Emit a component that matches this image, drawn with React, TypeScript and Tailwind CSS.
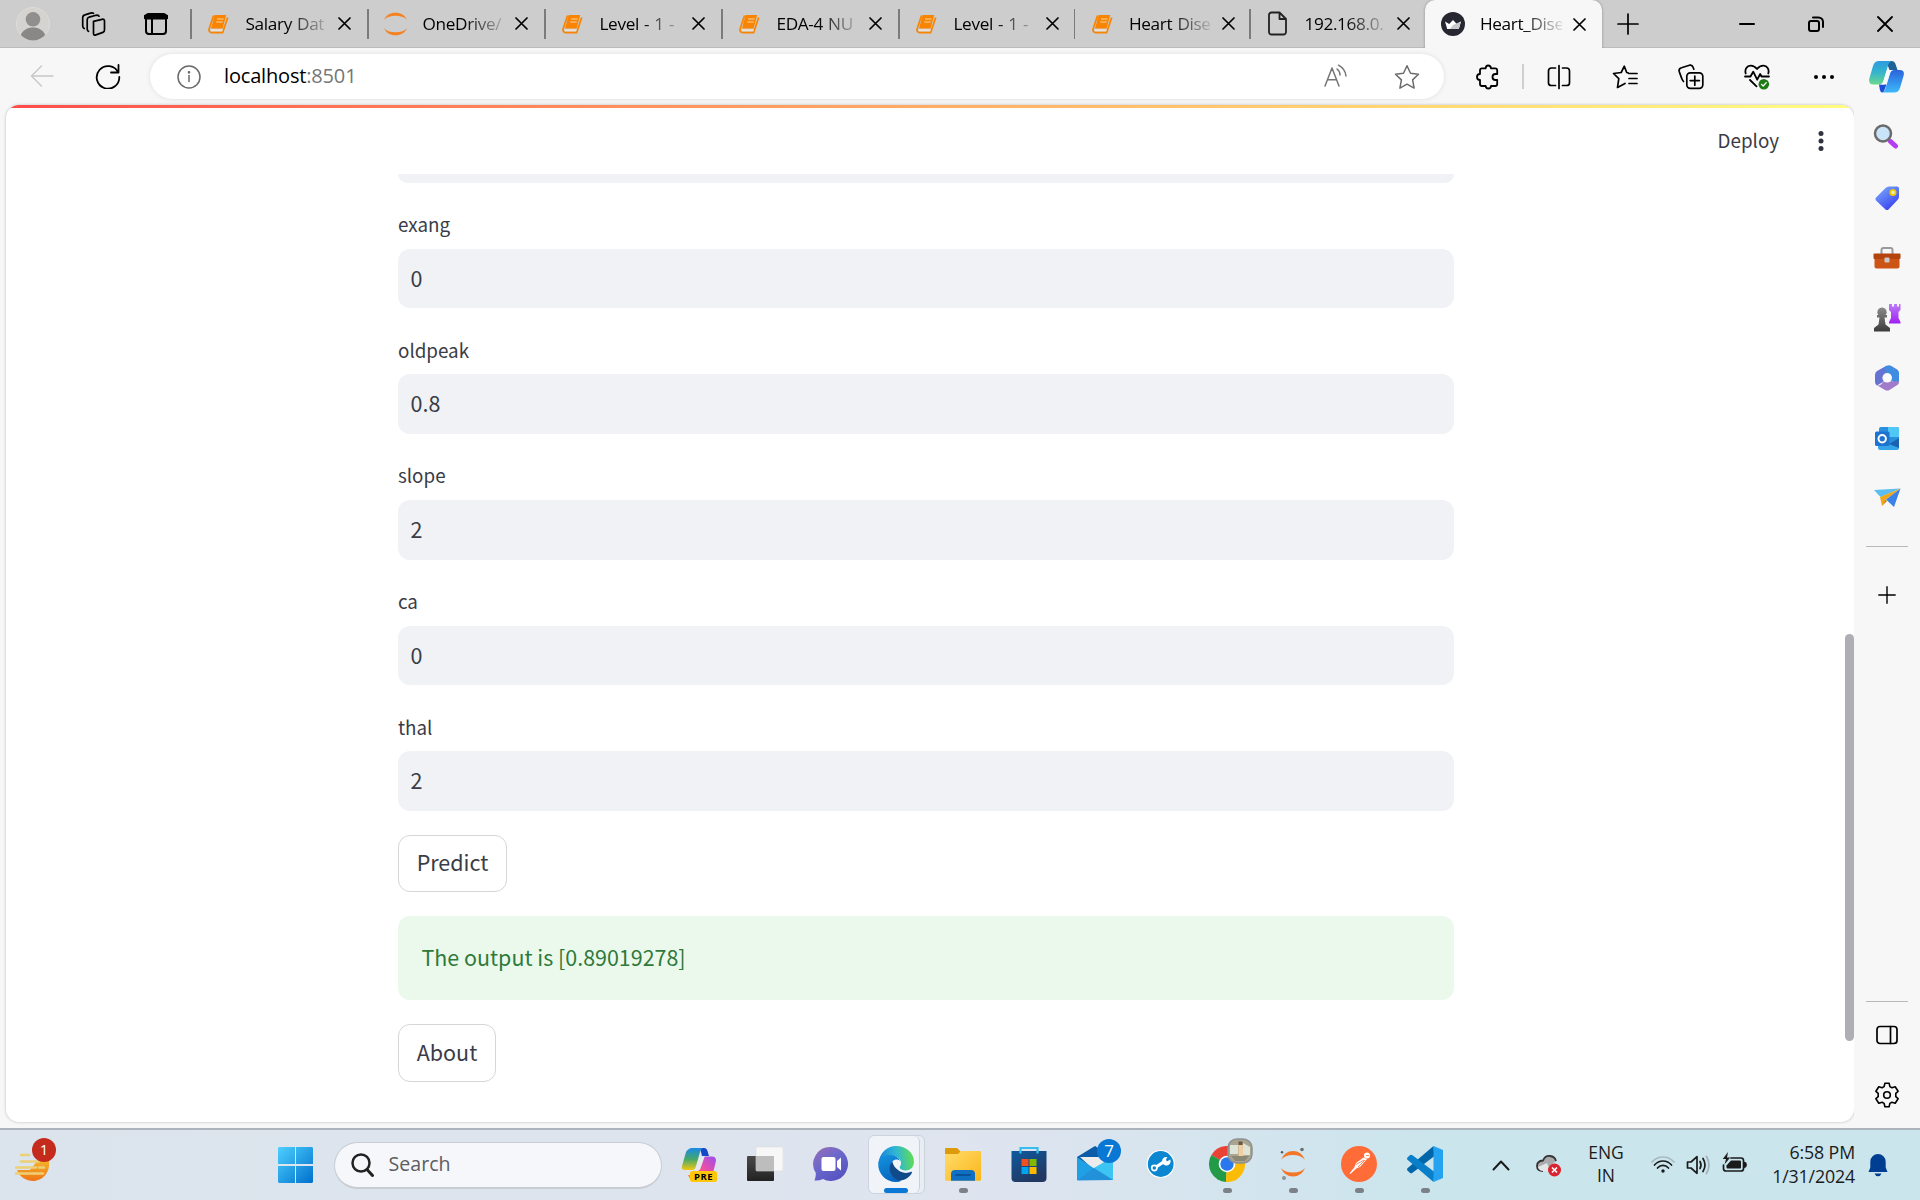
import React from "react";

type IconProps = { w?: number; h?: number; vb?: string; sw?: number; className?: string; children: React.ReactNode };

function Line({ w = 24, h = 24, vb = "0 0 24 24", sw = 1.6, className = "text-black", children }: IconProps) {
  return (
    <svg width={w} height={h} viewBox={vb} fill="none" stroke="currentColor" strokeWidth={sw} strokeLinecap="round" strokeLinejoin="round" className={"shrink-0 " + className}>
      {children}
    </svg>
  );
}

function Art({ w = 36, h = 36, vb = "0 0 36 36", className = "", children }: IconProps) {
  return (
    <svg width={w} height={h} viewBox={vb} className={"shrink-0 " + className}>
      {children}
    </svg>
  );
}

/* ---------- tab strip ---------- */

const BookIcon = () => (
  <Art w={21} h={20} vb="0 0 21 20">
    <path d="M6.6 1h11.600L14.600 14.500H3z" fill="#f98402" />
    <path d="M5.600 1.600 1.400 14c-1 2.800.2 4.700 2.400 4.700h10.800L19.700 3.400" fill="none" stroke="#f98402" strokeWidth="1.700" strokeLinejoin="round" />
    <path d="M3 16.200h11.500" stroke="#fde6cc" strokeWidth="1.300" />
    <path d="M9 5h6.600M8.200 8h6.600" stroke="#fbd3a0" strokeWidth="1.200" />
  </Art>
);

const JupyterArcs = () => (
  <Art w={23} h={24} vb="0 0 23 24">
    <path d="M0 7.800C2 3.200 6.300.8 11.500.8S21 3.200 23 7.800C20 4.800 16 3.800 11.500 3.800S3 4.800 0 7.800zM0 16.200c2 4.600 6.300 7 11.500 7s9.500-2.400 11.500-7c-3 3-7 4-11.500 4s-8.500-1-11.500-4z" fill="#f58220" />
  </Art>
);

const FileIcon = () => (
  <Line w={22} h={25} vb="0 0 22 25" sw={1.800} className="text-[#222]">
    <path d="M4.500 1.500h8L19 8v13a2.500 2.500 0 0 1-2.500 2.500h-12A2.500 2.500 0 0 1 2 21V4a2.500 2.500 0 0 1 2.500-2.500zM12.500 1.500V8H19" />
  </Line>
);

const CrownIcon = () => (
  <Art w={24} h={24} vb="0 0 24 24">
    <circle cx="12" cy="12" r="12" fill="#262730" />
    <path d="M4 9.500 8.200 12 12 8l3.800 4L20 9.500 17.800 17H6.200z" fill="#fff" />
    <path d="m12 13 8-3.500L17.800 17H9z" fill="#c9c9cc" />
  </Art>
);

const CloseX = () => (
  <Line w={13} h={13} vb="0 0 13 13" sw={1.700}>
    <path d="m1 1 11 11M12 1 1 12" />
  </Line>
);

const wide = "flex w-[177px] items-center";
const narrow = "flex w-[175.500px] items-center";

const tabs: { title: string; icon: React.ReactNode; cls: string }[] = [
  { title: "Salary Dat", icon: <BookIcon />, cls: wide },
  { title: "OneDrive/", icon: <JupyterArcs />, cls: wide },
  { title: "Level - 1 -", icon: <BookIcon />, cls: wide },
  { title: "EDA-4 NU", icon: <BookIcon />, cls: wide },
  { title: "Level - 1 -", icon: <BookIcon />, cls: narrow },
  { title: "Heart Dise", icon: <BookIcon />, cls: narrow },
  { title: "192.168.0.", icon: <FileIcon />, cls: narrow },
];

function TabBody({ title, icon }: { title: string; icon: React.ReactNode }) {
  return (
    <>
      <div className="ml-[15px] flex w-[24px] shrink-0 justify-center">{icon}</div>
      <div className="ml-[15px] w-[82px] whitespace-nowrap bg-linear-to-r from-black from-50% to-black/10 to-100% bg-clip-text text-[17.200px] leading-[26px] tracking-[-0.350px] text-transparent [word-spacing:1px]">
        {title}
      </div>
      <div className="ml-[10.500px]"><CloseX /></div>
    </>
  );
}

function TabStrip() {
  return (
    <div className="flex h-[48px] items-center border-b border-[#bcbaba] bg-[#cdcdcd]">
      <div className="flex w-[190px] items-center">
        <Art w={34} h={34} vb="0 0 34 34" className="ml-[16px]">
          <circle cx="17" cy="17" r="16.500" fill="#d5d3d0" stroke="#dedcd8" />
          <circle cx="17" cy="12.300" r="7.300" fill="#918f8d" />
          <path d="M4.800 28c2-5 6.600-7.600 12.200-7.600S27.200 23 29.200 28A16.500 16.500 0 0 1 17 33.500 16.500 16.500 0 0 1 4.800 28z" fill="#8a8886" />
        </Art>
        <Line w={26} h={26} vb="0 0 26 26" sw={1.700} className="ml-[30px]">
          <path d="m13.500 10.300 8.500-2q2.500-.5 2.500 1.800v8.900q0 1.800-1.600 2.400l-7 2.500q-2.400.8-2.400-1.400v-10.200q0-1.600 0-2zM8.500 20.300q-1.300-.6-1.300-2.400V8.600q0-2 2-2.500l6.800-1.800q2.500-.6 3 .9M4.200 17.500q-1.500-.8-1.500-2.700V6.800q0-2.300 2.200-2.900l5.600-1.800q2-.6 3 .2" />
        </Line>
        <Line w={24} h={24} vb="0 0 24 24" sw={2} className="ml-[38px]">
          <rect x="2" y="2" width="20" height="20" rx="3" />
          <path d="M2 5h20" strokeWidth="5" />
          <path d="M8 7v15" />
        </Line>
      </div>
      {tabs.map((t, i) => (
        <div key={i} className={t.cls}>
          <div className="h-[30px] w-[1.500px] shrink-0 bg-[#7b7b7b]" />
          <TabBody title={t.title} icon={t.icon} />
        </div>
      ))}
      <div className="mb-[-2px] flex h-[49px] w-[177px] items-center rounded-t-[10px] bg-[#f7f7f7] pb-[1px] pl-[1.500px] shadow-[0_0_3px_rgba(0,0,0,0.3)]">
        <TabBody title="Heart_Dise" icon={<CrownIcon />} />
      </div>
      <Line w={22} h={22} vb="0 0 22 22" sw={1.700} className="ml-[15px] text-black">
        <path d="M11 1v20M1 11h20" />
      </Line>
      <div className="ml-auto flex items-center">
        <Line w={16} h={16} vb="0 0 16 16" sw={2}><path d="M1 8h14" /></Line>
        <Line w={16} h={16} vb="0 0 16 16" sw={2} className="ml-[53px] text-black">
          <rect x="1" y="5" width="10" height="10" rx="2" />
          <path d="M5 1.500h5.500a4.500 4.500 0 0 1 4.500 4.500v5" />
        </Line>
        <Line w={16} h={16} vb="0 0 16 16" sw={1.800} className="ml-[53px] mr-[27px] text-black"><path d="m1 1 14 14M15 1 1 15" /></Line>
      </div>
    </div>
  );
}

/* ---------- address row ---------- */

function Slot({ children }: { children: React.ReactNode }) {
  return <div className="flex w-[66.200px] shrink-0 justify-center">{children}</div>;
}

function Toolbar() {
  return (
    <div className="flex h-[57px] items-center bg-[#f7f7f7]">
      <Line w={24} h={22} vb="0 0 24 22" sw={1.500} className="mb-[2px] ml-[30px] text-[#c8c8c8]">
        <path d="M11.500 1 1.500 11l10 10M2 11h21" />
      </Line>
      <Line w={26} h={26} vb="0 0 26 26" sw={1.800} className="mb-[1px] ml-[41px] text-black">
        <path d="M23.200 9.500A11.300 11.300 0 1 0 24.300 14M23.500 2v7.500H16" />
      </Line>
      <div className="ml-[29px] flex h-[45px] w-[1294px] items-center rounded-full bg-white shadow-[0_0_5px_rgba(0,0,0,0.1)]">
        <Line w={24} h={24} vb="0 0 24 24" sw={1.500} className="ml-[27px] text-[#6a6a6a]">
          <circle cx="12" cy="12" r="11" />
          <path d="M12 10.500v6" /><circle cx="12" cy="7.300" r=".6" fill="currentColor" />
        </Line>
        <div className="ml-[23px] mt-[-1px] text-[20px] leading-[28px] tracking-[-0.170px] text-black">
          localhost<span className="text-[#767676]">:8501</span>
        </div>
        <Line w={24} h={24} vb="0 0 24 24" sw={1.500} className="ml-auto mr-[46px] mt-[-2px] text-[#757575]">
          <path d="M1 22 8 4l7 18M3.500 15.800h9M13 5c2 1.500 3 3.500 3 6M14.500 1.200c4.500 2.500 7 6 7.500 10.800" />
        </Line>
        <Line w={26} h={26} vb="0 0 26 26" sw={1.500} className="mr-[24.500px] text-[#6c6c6c]">
          <path d="m13 1.700 3.500 7.500 8 1-5.900 5.700 1.500 8.200L13 20.200l-7.100 3.900 1.500-8.200-5.900-5.700 8-1z" />
        </Line>
      </div>
      <div className="ml-[11px] flex items-center">
        <Slot>
          <Line w={24} h={26} vb="0 0 24 26" sw={1.800}>
            <path d="M6 4.300h3.700Q9.700 1.500 12.200 1.500T15 4.300h4.200q2 0 2 2V10h-1.700a3 3 0 0 0 0 6h1.700v4q0 2-2 2H15q0 2.500-2.600 2.500T9.700 22H6q-2 0-2-2v-4Q1 16 1 13t3-3V6.300q0-2 2-2z" />
          </Line>
        </Slot>
        <div className="ml-[1px] h-[25px] w-[2px] bg-[#cfcfcf]" />
        <div className="ml-[1.500px] flex items-center">
          <Slot>
            <Line w={24} h={26} vb="0 0 24 26" sw={1.700}>
              <path d="M12 1.500v23M8.500 4H4.500Q1.500 4 1.500 7v12q0 2.500 3 2.500h4M15.500 4h4q3 0 3 3v12q0 2.500-3 2.500h-4" />
            </Line>
          </Slot>
          <Slot>
            <Line w={26} h={26} vb="0 0 26 26" sw={1.700}>
              <path d="m16 8.800-1.300-.3L12.300 2.200 9.200 8.500l-7.700 1 5.300 5.200-1.300 8.800 7.500-4M17 9.500h8M17 14.500h8M17 19.500h8" />
            </Line>
          </Slot>
          <Slot>
            <Line w={26} h={26} vb="0 0 26 26" sw={1.700}>
              <rect x="8.800" y="8.800" width="16" height="15.500" rx="3.500" />
              <path d="M16.800 12v9.200M12.200 16.600h9.200M5.500 17.500c-1-1-1.500-2-1.900-3.400L1.200 7.500C.8 5.500 1.500 4.400 3.500 3.800l8-2.600c1.800-.4 3 .2 3.600 2l.7 2" />
            </Line>
          </Slot>
          <Slot>
            <Line w={26} h={28} vb="0 0 26 28" sw={1.800}>
              <path d="M1.700 10.500C.5 6 3 3 6.500 2.700c2.500-.2 4.500 1 6.500 3.300 2-2.300 4-3.500 6.500-3.300 3.500.3 6 3.300 4.800 7.800M1 13.500h5.500l2.700-4.800 4 8 3-5.700 1.300 2.500H25M6 17l6.500 6.300" />
              <circle cx="19.800" cy="21.200" r="5.300" fill="#1e7a12" stroke="none" />
              <path d="m17.500 21.400 1.700 1.600 3-3.400" stroke="#fff" strokeWidth="1.300" />
            </Line>
          </Slot>
          <Slot>
            <Art w={22} h={6} vb="0 0 22 6"><circle cx="3" cy="3" r="2" /><circle cx="11" cy="3" r="2" /><circle cx="19" cy="3" r="2" /></Art>
          </Slot>
          <Art w={37} h={34} vb="0 0 37 34" className="ml-[11px]">
            <defs>
              <linearGradient id="cpA" x1=".3" y1="0" x2="0.300" y2="1"><stop stopColor="#2d9be0" /><stop offset=".5" stopColor="#36b5cc" /><stop offset="1" stopColor="#6bd88c" /></linearGradient>
              <linearGradient id="cpB" x1=".3" y1="0" x2="0.300" y2="1"><stop stopColor="#2a64dc" /><stop offset="1" stopColor="#3db8fa" /></linearGradient>
            </defs>
            <path d="M18 1h6q2.500 0 3.300 2.500L29.500 10h-8z" fill="#1d6398" />
            <path d="M11 1h13q-2.800.5-4 4.500L15.500 21q-1.200 3.500-4.500 3.500H5.500Q.3 24.500 1.200 19L5 6q1.500-5 6-5z" fill="url(#cpA)" />
            <path d="M11 24.500h7.500L16.500 30q-.8 2.500-2.500 2.500-1.500 0-2.200-3z" fill="#1d4ed8" />
            <path d="M26 32.500H14q2.500-.5 3.500-4L22 13.500Q23 10 26 10h5.500q5.200 0 4.300 5L32 28q-1.500 4.500-6 4.500z" fill="url(#cpB)" />
            <path d="M20 10h5.500q-2.800 0-3.600 3.500L19 22q-.8 2.500-3.200 2.500H11q3.200 0 4.500-3.500L18 12.500q.6-2.500 2-2.500z" fill="#f8fafa" />
          </Art>
        </div>
      </div>
    </div>
  );
}

/* ---------- edge sidebar ---------- */

function SideItem({ children }: { children: React.ReactNode }) {
  return <div className="flex h-[60.100px] shrink-0 items-center justify-center">{children}</div>;
}

function Sidebar() {
  return (
    <div className="flex w-[66px] flex-col bg-[#f7f7f7]">
      <div className="h-[2.500px]" />
      <SideItem>
        <Art w={26} h={26} vb="0 0 26 26" className="mb-[2px] mr-[2px]">
          <path d="m17.500 17.500 5 4.500" stroke="#b43df0" strokeWidth="5" strokeLinecap="round" />
          <circle cx="10" cy="9.500" r="8" fill="#c9e3f8" stroke="#6b6b6b" strokeWidth="2.500" />
        </Art>
      </SideItem>
      <SideItem>
        <Art w={26} h={26} vb="0 0 26 26">
          <defs><linearGradient id="tag" x1="0" y1="0" x2=".7" y2="1"><stop stopColor="#7db4fb" /><stop offset="1" stopColor="#3a3ff0" /></linearGradient></defs>
          <path d="M15 1.500h8q2 0 2 2v8q0 2-1.500 3.500l-9 9.500q-1.500 1.200-3 0L2 15.500q-1.300-1.500 0-3L11.500 3Q13 1.500 15 1.500z" fill="url(#tag)" />
          <circle cx="19" cy="7.500" r="2.600" fill="#e8f0c0" stroke="#f2c800" strokeWidth="1.800" />
        </Art>
      </SideItem>
      <SideItem>
        <Art w={28} h={22} vb="0 0 28 22">
          <path d="M8.500 7V3q0-2 2-2h7q2 0 2 2v4" fill="none" stroke="#9a9a9a" strokeWidth="2" />
          <rect x="1.500" y="8" width="25" height="13.500" rx="2" fill="#cc5515" />
          <rect x="0.500" y="6.500" width="27" height="5.500" rx="1" fill="#b5430c" />
          <rect x="11.500" y="10.500" width="5" height="5" rx="1" fill="#c9c9c9" />
        </Art>
      </SideItem>
      <SideItem>
        <Art w={28} h={28} vb="0 0 28 28">
          <defs>
            <linearGradient id="rook" x1="0" y1="0" x2="0" y2="1"><stop stopColor="#bb7df8" /><stop offset="1" stopColor="#a020f0" /></linearGradient>
            <linearGradient id="pawn" x1="0" y1="0" x2="0" y2="1"><stop stopColor="#8a8a8a" /><stop offset="1" stopColor="#3c3c3c" /></linearGradient>
          </defs>
          <path d="M16 0h3v2.500h2V0h3v2.500h2V0h1.500v6l-2 2v6l2 4v1.500H16V18l2-4V8l-2-2z" fill="url(#rook)" />
          <path d="M9 3.500a4.500 4.500 0 0 1 3.500 7.500H14v2.500h-2.500l1 7L17 24v3.500H1V24l4.500-3.500 1-7H4V11h1.500A4.500 4.500 0 0 1 9 3.500z" fill="url(#pawn)" />
        </Art>
      </SideItem>
      <SideItem>
        <Art w={26} h={28} vb="0 0 26 28">
          <path d="M13 1.500 3 7Q1 8.500 1 10.500v7.500q0 2.500 2 3.500l6-3.500 4-4V6z" fill="#6673d2" />
          <path d="M10 3.500 13 1.700q2-1 4 0l6.500 4q1.500 1.200 1.500 3.300v8q0 2-1.500 3.500L18 17l-5-3-1-6z" fill="#3f8ce0" />
          <path d="M24 20.500 15.500 26q-2.200 1-4.500 0L2.500 21q2.500 1 4.500-.5l6-6.500 5.500 3.500 6.500-.5q0 2.300-1 3.500z" fill="#a07bc9" />
          <circle cx="13.200" cy="13.800" r="4.800" fill="#fafafa" />
        </Art>
      </SideItem>
      <SideItem>
        <Art w={26} h={25} vb="0 0 26 25">
          <rect x="5" y="1" width="20" height="22" rx="2" fill="#2a8fdd" />
          <path d="M14 1h9q2 0 2 2v8H14z" fill="#50c8f5" />
          <path d="M4 11.500 15 18l10-6v10q0 2-2 2H6q-2 0-2-2z" fill="#35a5ea" />
          <path d="M15 18 25 12v10z" fill="#1b62b0" />
          <rect x="1" y="5.500" width="14.500" height="14.500" rx="1.500" fill="#1f73d0" />
          <circle cx="8.200" cy="12.700" r="3.700" fill="none" stroke="#fff" strokeWidth="2" />
        </Art>
      </SideItem>
      <SideItem>
        <Art w={27} h={20} vb="0 0 27 20">
          <path d="m0 2 26.500-1.500L6.500 9z" fill="#5bbdf2" />
          <path d="M26.500.5 6 9l2 9 4-6.500z" fill="#f0a818" />
          <path d="M26.500.5 20 19l-8-7.500z" fill="#3b82e8" />
          <path d="m8 18 5-5-1.500-1.200z" fill="#c47e08" />
        </Art>
      </SideItem>
      <div className="mx-auto mt-[18px] h-px w-[42px] bg-[#b9b9b9]" />
      <Line w={18} h={18} vb="0 0 18 18" sw={1.400} className="mx-auto mt-[39px] text-black"><path d="M9 .8v16.400M.8 9h16.400" /></Line>
      <div className="mx-auto mt-auto h-px w-[42px] bg-[#b9b9b9]" />
      <Line w={22} h={20} vb="0 0 22 20" sw={1.700} className="mx-auto mt-[23px] text-black">
        <rect x="1" y="1.500" width="20" height="17" rx="3" /><path d="M14.500 1.500v17" />
      </Line>
      <Line w={26} h={26} vb="0 0 26 26" sw={1.600} className="mx-auto mb-[20px] mt-[37px] text-black">
        <circle cx="13" cy="13" r="3.300" />
        <path d="M10.900 1.200h4.200l.8 3.400 2 1.100 3.300-1 2.900 4.600-2.300 2v3.400l2.300 2-2.900 4.600-3.300-1-2 1.100-.8 3.400h-4.200l-.8-3.400-2-1.100-3.300 1-2.900-4.600 2.300-2v-3.400l-2.300-2 2.900-4.600 3.300 1 2-1.100z" />
      </Line>
    </div>
  );
}

/* ---------- page ---------- */

function Field({ label, value }: { label: string; value: string }) {
  return (
    <div className="flex h-[125.600px] flex-col justify-end">
      <div className="mb-[12.500px] text-[18.800px] leading-[24px]">{label}</div>
      <div className="flex h-[59.600px] shrink-0 items-center rounded-[12px] bg-[#f0f2f6] pb-[1.600px] pl-[12.500px] text-[21.500px] leading-[30px]">{value}</div>
    </div>
  );
}

function Page() {
  return (
    <div className="ml-[6px] flex h-[1017px] w-[1848px] flex-col overflow-hidden rounded-[13px] bg-white font-['Noto_Sans_CJK_SC','Noto_Sans',sans-serif] text-[#3a3c47] shadow-[0_0_3px_rgba(0,0,0,0.25)]">
      <div className="h-[3px] shrink-0 bg-linear-to-r from-[#ff4b4b] to-[#fffd80]" />
      <div className="flex h-[66px] shrink-0 items-center justify-end">
        <div className="mt-[-2px] text-[18.800px] leading-[26px]">Deploy</div>
        <Art w={6} h={22} vb="0 0 6 22" className="ml-[39px] mr-[30px]"><circle cx="3" cy="3.500" r="2.500" fill="#31333f" /><circle cx="3" cy="11" r="2.500" fill="#31333f" /><circle cx="3" cy="18.500" r="2.500" fill="#31333f" /></Art>
      </div>
      <div className="flex grow">
        <div className="ml-[392px] w-[1056px]">
          <div className="h-[8.800px] rounded-b-[12px] bg-[#f0f2f6]" />
          <Field label="exang" value="0" />
          <Field label="oldpeak" value="0.8" />
          <Field label="slope" value="2" />
          <Field label="ca" value="0" />
          <Field label="thal" value="2" />
          <button className="mt-[24px] flex h-[57.600px] w-[109px] items-center justify-center rounded-[12px] border border-[#d6d6d9] pb-[3px] text-[21.500px]">Predict</button>
          <div className="mt-[24px] flex h-[83.600px] items-center rounded-[12px] bg-[#ebf9ec] pb-[2px] pl-[23.500px] text-[21.450px] text-[#2f7a3b]">The output is [0.89019278]</div>
          <button className="mt-[24px] flex h-[57.600px] w-[98px] items-center justify-center rounded-[12px] border border-[#d6d6d9] pb-[2px] text-[21.500px]">About</button>
        </div>
        <div className="ml-auto mt-[460px] h-[407px] w-[9px] rounded-full bg-[#aeaeb4]" />
      </div>
    </div>
  );
}

/* ---------- taskbar ---------- */

function TaskItem({ running, children }: { running?: boolean; children: React.ReactNode }) {
  return (
    <div className="flex h-[70px] w-[66px] shrink-0 flex-col items-center">
      <div className="mt-[16px] flex h-[36px] items-center">{children}</div>
      {running && <div className="mt-[6px] h-[5px] w-[9px] rounded-full bg-[#7c8187]" />}
    </div>
  );
}

function Taskbar() {
  return (
    <div className="flex h-[72px] items-center border-t-2 border-[#adb3bb] bg-linear-to-r from-[#dbe4ec] via-[#dfe4ef] to-[#cbe5ed] to-75% text-[#1b1b1b]">
      <div className="relative ml-[15px] h-[70px] w-[42px]">
        <Art w={42} h={46} vb="0 0 42 46" className="mt-[8px]">
          <defs><linearGradient id="sun" x1="0" y1="0" x2="0" y2="1"><stop stopColor="#f3b62a" /><stop offset="1" stopColor="#ef7417" /></linearGradient></defs>
          <path d="M2 33h13l8-10h11v6a16.500 16.500 0 0 1-32 4z" fill="url(#sun)" transform="translate(0 -1)" />
          <path d="M6 17h8M6 23.500h18M1 29.500h20M24 29.500h5M1 35.500h27" stroke="#edcf76" strokeWidth="2.600" strokeLinecap="round" />
        </Art>
        <div className="absolute left-[17px] top-[8px] flex h-[24px] w-[24px] items-center justify-center rounded-full bg-[#c42b1c] pb-[1px] text-[15px] text-white">1</div>
      </div>
      <Art w={35} h={36} vb="0 0 35 36" className="ml-[221px]">
        <defs><linearGradient id="win" x1="0" y1="0" x2="1" y2="1"><stop stopColor="#4dd0ff" /><stop offset="1" stopColor="#0070cc" /></linearGradient></defs>
        <path d="M1 0h16v17H0V1zM18 0h16l1 1v16H18zM0 19h17v17H1l-1-1zM18 19h17v16l-1 1H18z" fill="url(#win)" />
      </Art>
      <div className="ml-[21px] flex h-[47px] w-[328px] items-center rounded-full border border-b-2 border-[#c8ccd3] bg-[#f6f7fa]">
        <Line w={23} h={24} vb="0 0 23 24" sw={2.500} className="ml-[16px] text-[#222]">
          <circle cx="10" cy="10" r="8.500" /><path d="m16 16.500 5.500 6" strokeWidth="3" />
        </Line>
        <div className="ml-[14.500px] mt-[-1px] text-[19.600px] leading-[26px] text-[#5c5e61]">Search</div>
      </div>
      <div className="ml-[4px] flex">
        <TaskItem>
          <Art>
            <defs>
              <linearGradient id="pa" x1="0" y1="0" x2="0" y2="1"><stop stopColor="#1a8ae8" /><stop offset=".5" stopColor="#43a86a" /><stop offset="1" stopColor="#f2c811" /></linearGradient>
              <linearGradient id="pb" x1="1" y1="0" x2="0" y2="1"><stop stopColor="#9a4ff0" /><stop offset=".5" stopColor="#f04fa0" /><stop offset="1" stopColor="#ff8a4a" /></linearGradient>
            </defs>
            <path d="M19 2h4q2.500 0 3.500 3l1.500 5h-7z" fill="#1547c8" />
            <path d="M8 3q1-1 3-1h12q-3 0-4 4l-4 14q-1 4-4 4H4q-4 0-3-4L5 6q1-2 3-3z" fill="url(#pa)" />
            <path d="M9 33h14q3 0 4-3h4q3-10 4-15.500 0-4-4-4h-6q-3 0-4 3.500l-4 12q-1 3-4 3H7z" fill="url(#pb)" />
            <path d="M18.500 11h5l-4 11.500q-.8 2-2.500 2h-3z" fill="#e6e9ef" />
            <rect x="9" y="25" width="27" height="11" rx="2.500" fill="#ffc60a" />
            <text x="22.500" y="34" textAnchor="middle" fontSize="9.500" fontWeight="700" letterSpacing=".5" fontFamily="Open Sans, sans-serif">PRE</text>
          </Art>
        </TaskItem>
        <TaskItem>
          <Art>
            <defs><linearGradient id="tv" x1="0" y1="0" x2="0" y2="1"><stop stopColor="#4a4a4a" /><stop offset="1" stopColor="#222" /></linearGradient></defs>
            <rect x="0" y="10" width="27" height="25" rx="1" fill="url(#tv)" />
            <rect x="9" y="1" width="27" height="24" rx="1" fill="#f7f7f7" stroke="#dcdcdc" strokeWidth=".6" />
            <path d="M9 10h18v15H9z" fill="#bdbdbd" />
          </Art>
        </TaskItem>
        <TaskItem>
          <Art>
            <defs><linearGradient id="tm" x1="0" y1="0" x2=".7" y2="1"><stop stopColor="#9a6fb5" /><stop offset=".5" stopColor="#6a68cc" /><stop offset="1" stopColor="#5552c0" /></linearGradient></defs>
            <path d="M18 1a17 17 0 1 1-8 32q-4 2-8.500 1.500Q3 31 2.800 27A17 17 0 0 1 18 1z" fill="url(#tm)" />
            <rect x="8.500" y="11" width="14" height="14" rx="2" fill="#fff" />
            <path d="m24 15 4-3.500v13L24 21z" fill="#fff" />
          </Art>
        </TaskItem>
        <div className="flex h-[70px] w-[66px] shrink-0">
          <div className="ml-[4px] mt-[5px] flex h-[59px] w-[57px] rounded-[6px] border border-[#ccd3dd] bg-[#e8ecf3]">
            <div className="flex w-[51px] flex-col items-center rounded-[6px] border-r border-[#c8d0da] bg-[#f0f4f9]">
              <Art className="ml-[4px] mt-[10px]">
                <defs>
                  <linearGradient id="ea" x1="0" y1=".4" x2="1" y2=".3"><stop stopColor="#1683d8" /><stop offset=".5" stopColor="#2fb6d6" /><stop offset="1" stopColor="#62e04a" /></linearGradient>
                  <linearGradient id="eb" x1="0" y1="0" x2=".4" y2="1"><stop stopColor="#1593e0" /><stop offset="1" stopColor="#0767c0" /></linearGradient>
                </defs>
                <path d="M.5 17C1.500 7 9 0 18 0c10.500 0 18 7.500 18 15.500 0 6-4 9-8.500 9-4 0-6-1.500-6-3 0-1.200 1.500-1.500 1.500-4.500 0-3.500-3.500-7-9-7S2 13 .5 17z" fill="url(#ea)" />
                <path d="M.2 18C.5 12 6 8.500 12 9c6 .5 9 3 10 6-2-2-5-2-7 0-4 4-3.500 13 2 17 2 1.500 5 2.500 7 2.500-2 1-4 1.500-6 1.500C8 36 0 28 .2 18z" fill="url(#eb)" />
                <path d="M14.500 15.500C9 20 11.500 32 21 34.500c6 0 11-3.500 13-8 .2-1-.5-1-1-.7-3 1.500-8 1.700-12-1-3.500-2.500-6-5.500-6.500-9.300z" fill="#114a8b" />
                <path d="M14.500 15.800Q18 12.500 22.500 15.500 23 18.500 21.500 21q-.5 2.500 5 3.500-8 1.500-12-8.700z" fill="#f0f4f9" />
              </Art>
              <div className="ml-[3px] mt-[6px] h-[5px] w-[24px] rounded-full bg-[#0a78d4]" />
            </div>
          </div>
        </div>
        <TaskItem running>
          <Art>
            <defs><linearGradient id="fd" x1="0" y1="0" x2="1" y2="1"><stop stopColor="#ffdc6b" /><stop offset="1" stopColor="#fbb618" /></linearGradient></defs>
            <path d="M0 3q0-1 1-1h11l4 4v6H0z" fill="#dd9b0b" />
            <path d="M0 8h13l3-3h19q1 0 1 1v28q0 .8-1 .8H1q-1 0-1-.8z" fill="url(#fd)" />
            <path d="M6 34.800V28q0-4 4-4h16q4 0 4 4v6.800z" fill="#0f6fc2" />
            <path d="M11 29h14" stroke="#0a4a8a" strokeWidth="1.600" strokeLinecap="round" />
          </Art>
        </TaskItem>
        <TaskItem>
          <Art>
            <defs><linearGradient id="st" x1="0" y1="0" x2=".5" y2="1"><stop stopColor="#0d5a9e" /><stop offset="1" stopColor="#223862" /></linearGradient></defs>
            <path d="M9.500 6V2h17v4" fill="none" stroke="#35bdf0" strokeWidth="2.200" />
            <path d="M.5 5h35v27q0 4-4 4h-27q-4 0-4-4z" fill="url(#st)" />
            <path d="M9.500 5v2.500M26.500 5v2.500" stroke="#35bdf0" strokeWidth="2.200" />
            <path d="M10.500 13h7v7h-7z" fill="#f25022" /><path d="M18.500 13h7v7h-7z" fill="#7fba00" />
            <path d="M10.500 21h7v7h-7z" fill="#00a4ef" /><path d="M18.500 21h7v7h-7z" fill="#ffb900" />
          </Art>
        </TaskItem>
        <div className="relative">
          <TaskItem>
            <Art>
              <path d="m0 11 18-11 18 11v8H0z" fill="#0c5ba8" />
              <path d="M3 11h30L18 25z" fill="#ececec" />
              <path d="M0 11l18 12L36 11v23H0z" fill="#1f9fe4" />
              <path d="M36 11v23L16 22.500z" fill="#3cc4f2" />
              <path d="M0 34.500 36 34 17 22z" fill="#2391da" />
            </Art>
          </TaskItem>
          <div className="absolute left-[35px] top-[9px] flex h-[24px] w-[24px] items-center justify-center rounded-full bg-[#0878d4] pb-[1px] text-[17px] text-white">7</div>
        </div>
        <TaskItem>
          <Art>
            <circle cx="17.700" cy="18" r="13.500" fill="#0a87d0" stroke="#fff" strokeWidth="1.200" />
            <path d="m13 21 9-6" stroke="#fff" strokeWidth="3.200" />
            <circle cx="11.300" cy="22" r="2.600" fill="#0a87d0" stroke="#fff" strokeWidth="1.700" />
            <path d="M27.300 13.500a4.300 4.300 0 1 1-3-2.500L22.800 14l1.500 1.200z" fill="#fff" />
          </Art>
        </TaskItem>
        <div className="relative">
          <TaskItem running>
            <Art>
              <path d="M18 18 2.400 9A18 18 0 0 1 33.600 9z" fill="#ea4335" />
              <path d="M18 18 17 36A18 18 0 0 1 2.400 9z" fill="#229a48" />
              <path d="M18 18 33.600 9A18 18 0 0 1 17 36z" fill="#fbbc05" />
              <path d="m17 36 8.500-14-7.500 4z" fill="#fbbc05" />
              <path d="M18 10h16l-3-5H12z" fill="#ea4335" />
              <circle cx="18" cy="18" r="8.300" fill="#fff" /><circle cx="18" cy="18" r="6.700" fill="#2a78ee" />
            </Art>
          </TaskItem>
          <Art w={26} h={26} vb="0 0 26 26" className="absolute left-[33px] top-[8px]">
            <rect x="1" y="1" width="24" height="24" rx="9" fill="#a9a68f" stroke="#8f9193" strokeWidth="1.500" />
            <path d="M3 7h8v9H3zM16 5l7 4v8h-7z" fill="#dfe4d8" />
            <path d="M4 18h18l-4 5H8z" fill="#8b8876" />
            <path d="M11.500 6h4l1 12h-5z" fill="#f1cf9f" /><path d="M11.500 3.500h4V7h-4z" fill="#6b5545" />
          </Art>
        </div>
        <TaskItem running>
          <Art>
            <path d="M6 14q3.500-9 12-9t12 9q-4-5-12-5T6 14zM6 22q3.500 8.500 12 8.500T30 22q-4 4.500-12 4.500T6 22z" fill="#f37726" />
            <circle cx="27" cy="3.500" r="1.800" fill="#6b6d70" /><circle cx="7" cy="6.200" r="1.200" fill="#55575a" /><circle cx="9" cy="32" r="2" fill="#8f9194" />
          </Art>
        </TaskItem>
        <TaskItem running>
          <Art>
            <circle cx="18" cy="18" r="18" fill="#ff6c37" />
            <circle cx="26" cy="9.500" r="3" fill="#fff" />
            <path d="M22.500 11.500 15 17l-1.500 4-5 6.500.8.500 6.700-6 3-1 7-8z" fill="#fff" />
            <path d="m15 18.500 8-4.500M17 21l7-7M25 9.500h3" stroke="#ff6c37" strokeWidth=".8" />
          </Art>
        </TaskItem>
        <TaskItem running>
          <Art>
            <path d="m26.500 0 1 10L5.500 26.800q-1.500 1-2.700 0L.5 24.500q-1-1.200 0-2.200z" fill="#0065a9" />
            <path d="m26.500 36 1-10L5.500 9.200q-1.500-1-2.700 0L.5 11.500q-1 1.200 0 2.200z" fill="#0a7fc9" />
            <path d="M26.500 0 36 4v28l-9.500 4z" fill="#25a2f0" />
          </Art>
        </TaskItem>
      </div>
      <Line w={18} h={11} vb="0 0 18 11" sw={2} className="ml-[34px] text-[#1b1b1b]"><path d="m1.500 9.500 7.500-8 7.500 8" /></Line>
      <Art w={26} h={24} vb="0 0 26 24" className="ml-[26px]">
        <path d="M7 18q-6 0-6-5t6-5.500Q9 2.500 14 3t6 5" fill="#a9aaac" stroke="#333" strokeWidth="1.800" />
        <path d="m2 14 9-4 3 8H7q-4 0-5-4z" fill="#e3e5e6" />
        <circle cx="18.500" cy="17" r="6.500" fill="#d9232e" />
        <path d="m16 14.500 5 5M21 14.500l-5 5" stroke="#fff" strokeWidth="1.700" />
      </Art>
      <div className="ml-[22px] mt-[-2px] w-[44px] text-center text-[17.500px] leading-[23px] tracking-[-0.100px]">ENG<br />IN</div>
      <Line w={24} h={20} vb="0 0 24 20" sw={1.700} className="ml-[22.500px] text-[#1b1b1b]">
        <path d="M1 7Q5.500 2 12 2t11 5" stroke="#a9bac0" />
        <path d="M3.500 10q3.500-4 8.500-4t8.500 4M6.500 13q2.300-2.600 5.500-2.600t5.500 2.600" />
        <circle cx="12" cy="16" r="1.700" fill="currentColor" stroke="none" />
      </Line>
      <Line w={25} h={22} vb="0 0 25 22" sw={1.700} className="ml-[11px] text-[#1b1b1b]">
        <path d="M1.500 8v6h3.500l6 5.300V2.700L5 8zM14 7.500q2 3.500 0 7M17 4.500q4 6.500 0 13" />
        <path d="M20.500 2.500q5 8.500 0 17" stroke="#9fb2b8" />
      </Line>
      <Line w={25} h={22} vb="0 0 25 22" sw={1.700} className="mb-[4px] ml-[11.500px] text-[#1b1b1b]">
        <path d="M9 6h10q2.500 0 2.500 2.500v8q0 2.500-2.500 2.500H4Q1.500 19 1.500 16.500V13" />
        <path d="M4.500 15.500v-2L9 8.500h9q1 0 1 1v6q0 1-1 1H5.500q-1 0-1-1z" fill="currentColor" stroke="none" />
        <path d="M22 10.500q2 0 2 2.300t-2 2.300z" fill="currentColor" />
        <path d="M6 0 .8 7H4l-1.500 5.500L8.200 5.500H5z" fill="currentColor" stroke="none" />
      </Line>
      <div className="ml-auto mt-[-3px] whitespace-nowrap text-right text-[17.800px] leading-[24px] tracking-[-0.150px]">6:58 PM<br />1/31/2024</div>
      <Art w={20} h={24} vb="0 0 20 24" className="ml-[13px] mr-[32px]">
        <path d="M10 1a7.700 7.700 0 0 1 7.700 7.700v5.800L19.500 19H.5l1.800-4.500V8.700A7.700 7.700 0 0 1 10 1zM6.500 20.500h7q-1 2.700-3.500 2.700t-3.500-2.700z" fill="#003e92" />
      </Art>
    </div>
  );
}

export default function App() {
  return (
    <div className="flex h-[1200px] w-[1920px] flex-col overflow-hidden bg-[#f7f7f7] font-['Open_Sans','Noto_Sans',sans-serif]">
      <TabStrip />
      <Toolbar />
      <div className="flex h-[1023px] shrink-0">
        <Page />
        <Sidebar />
      </div>
      <Taskbar />
    </div>
  );
}
